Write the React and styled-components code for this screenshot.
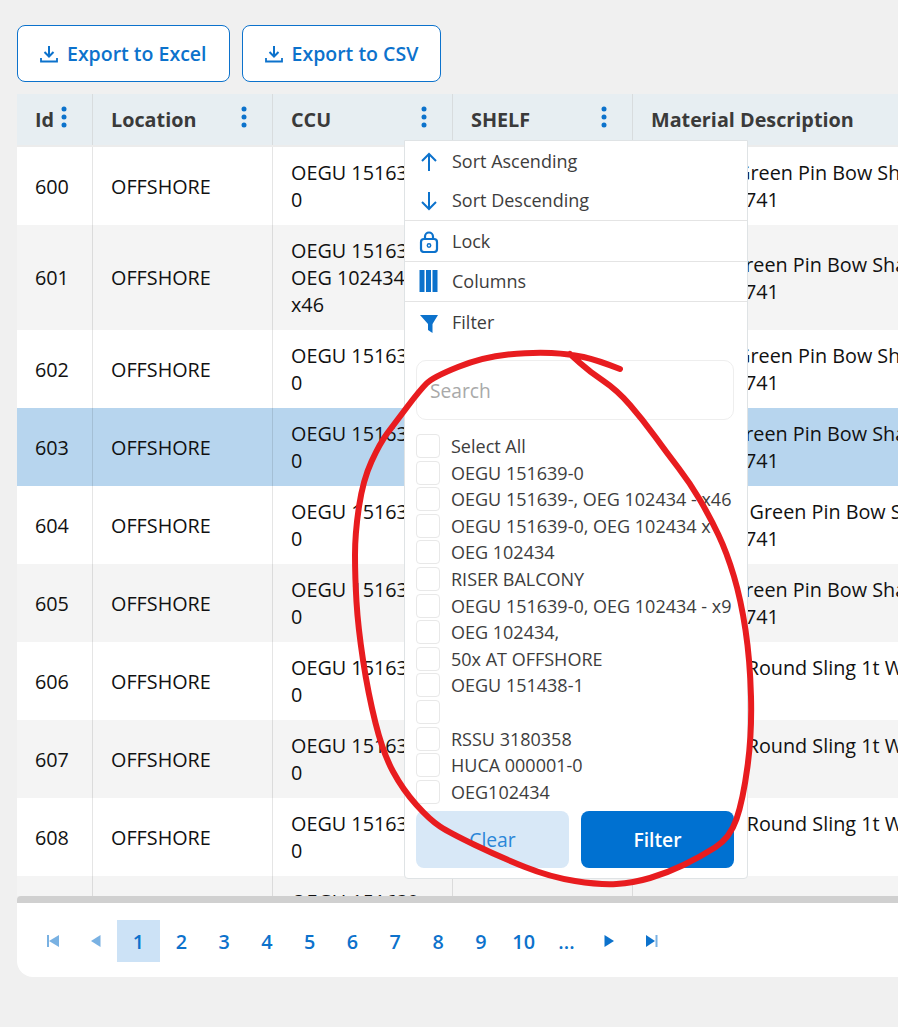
import React from "react";
import styled, { createGlobalStyle } from "styled-components";

const GlobalStyle = createGlobalStyle`
  html, body {
    margin: 0;
    padding: 0;
    background: #f0f0f0;
    overflow: hidden;
  }
  * {
    box-sizing: border-box;
  }
`;

const Page = styled.div`
  position: relative;
  width: 898px;
  height: 1027px;
  overflow: hidden;
  padding: 25px 0 0 17px;
  font-family: "Open Sans", "Liberation Sans", sans-serif;
  font-size: 19.8px;
  color: #111;
`;

const Toolbar = styled.div`
  display: flex;
  gap: 12px;
  margin-bottom: 12px;
`;

const ExportButton = styled.button`
  display: flex;
  align-items: center;
  gap: 9px;
  height: 57px;
  padding: 0 22px;
  background: #fff;
  border: 1px solid #0c72cc;
  border-radius: 8px;
  color: #0c72cc;
  font: 600 19.5px "Open Sans", sans-serif;
`;

const Card = styled.div`
  position: relative;
  width: 1300px;
`;

const HeaderRow = styled.div`
  display: flex;
  height: 51px;
  background: #e7eef2;
`;

const HeaderCell = styled.div`
  display: flex;
  align-items: center;
  justify-content: space-between;
  width: ${(p) => p.$width}px;
  padding: 0 25px 0 18px;
  border-right: 1px solid #d8dcde;
  font-weight: 700;
  color: #3a3a3a;
  white-space: nowrap;
`;

const Kebab = styled.svg`
  width: 6px;
  height: 22px;
  margin-top: -6px;
  fill: #0c72cc;
`;

const Rows = styled.div`
  height: 751px;
  overflow: hidden;
  border-top: 2px solid #ececec;
`;

const Row = styled.div`
  display: flex;
  background: ${(p) => (p.$selected ? "#b7d5ee" : p.$odd ? "#f4f4f4" : "#fff")};
`;

const Cell = styled.div`
  width: ${(p) => p.$width}px;
  padding: 12px 18px;
  line-height: 27px;
  border-right: 1px solid rgba(0, 0, 0, 0.1);
  display: flex;
  align-items: center;
`;

const Scrollbar = styled.div`
  height: 7px;
  background: #d0d0d0;
  border-radius: 4px 0 0 0;
`;

const Pager = styled.div`
  display: flex;
  align-items: center;
  height: 74px;
  padding: 2px 0 0 14.5px;
  background: #fff;
  border-bottom-left-radius: 16px;
`;

const PageButton = styled.div`
  display: flex;
  align-items: center;
  justify-content: center;
  width: 42.8px;
  height: 42px;
  color: #0c72cc;
  font-weight: 600;
  background: ${(p) => (p.$active ? "#cce2f6" : "transparent")};
`;

const PagerIcon = styled.svg`
  width: 14px;
  height: 14px;
  fill: #0c72cc;
  opacity: ${(p) => (p.$dim ? 0.55 : 1)};
`;

const Menu = styled.div`
  position: absolute;
  top: 46px;
  left: 387px;
  width: 344px;
  height: 739px;
  padding: 0 13px 0 11px;
  background: #fff;
  border: 1px solid #dfe3e5;
  border-radius: 0 0 4px 4px;
  color: #3d3d3d;
  font-size: 18px;
`;

const MenuGroup = styled.div`
  margin: 0 -13px 0 -11px;
  border-bottom: ${(p) => (p.$plain ? "none" : "1px solid #e4e4e4")};
`;

const MenuItem = styled.div`
  display: flex;
  align-items: center;
  height: 39.5px;
  padding-left: 14px;
`;

const MenuIcon = styled.svg`
  flex: none;
  width: 20px;
  height: 24px;
  margin-right: 13px;
  color: #0c72cc;
`;

const SearchInput = styled.input`
  display: block;
  width: 318px;
  height: 60px;
  margin: 18.5px 0 14px;
  padding: 0 13px;
  border: 1px solid #eee;
  border-radius: 10px;
  font: 19.2px "Open Sans", sans-serif;
  outline: none;
  &::placeholder {
    color: #a9a9a9;
  }
`;

const OptionRow = styled.label`
  display: flex;
  align-items: flex-start;
  height: 26.6px;
  line-height: 24px;
  white-space: nowrap;
`;

const Checkbox = styled.input`
  appearance: none;
  flex: none;
  width: 24px;
  height: 24px;
  margin: 0 11px 0 0;
  background: #fff;
  border: 1px solid #e8e8e8;
  border-radius: 4px;
`;

const Actions = styled.div`
  display: grid;
  grid-template-columns: 153px 153px;
  gap: 12px;
  margin-top: 4.6px;
`;

const ActionButton = styled.button`
  height: 57px;
  border: none;
  border-radius: 8px;
  background: ${(p) => (p.$primary ? "#0071d1" : "#d8e8f7")};
  color: ${(p) => (p.$primary ? "#fff" : "#2a86d8")};
  font: ${(p) => (p.$primary ? 600 : 400)} 19.3px "Open Sans", sans-serif;
`;

const Annotation = styled.svg`
  position: absolute;
  top: 0;
  left: 0;
  pointer-events: none;
`;

const columns = [76, 180, 180, 180, 684];
const headers = ["Id", "Location", "CCU", "SHELF", "Material Description"];

const green = "Green Pin Bow Shackle 4.75t";
const sling = "Round Sling 1t WLL 2m";
const rows = [
  { id: 600, ccu: "OEGU 151639-0", mat: "Heavy 2t " + green, code: "Art. Nr. 00741" },
  { id: 601, ccu: "OEGU 151639-, OEG 102434 - x46", mat: "Large 2t " + green, code: "Art. Nr. 00741" },
  { id: 602, ccu: "OEGU 151639-0", mat: "Heavy 2t " + green, code: "Art. Nr. 00741" },
  { id: 603, ccu: "OEGU 151639-0", mat: "Large 2t " + green, code: "Art. Nr. 00741", selected: true },
  { id: 604, ccu: "OEGU 151639-0", mat: "Shackle 1t " + green, code: "Art. Nr. 00741" },
  { id: 605, ccu: "OEGU 151639-0", mat: "Large 2t " + green, code: "Art. Nr. 00741" },
  { id: 606, ccu: "OEGU 151639-0", mat: "Polyester, " + sling, code: "Art. 52" },
  { id: 607, ccu: "OEGU 151639-0", mat: "Polyester, " + sling, code: "Art. 52" },
  { id: 608, ccu: "OEGU 151639-0", mat: "Polyester, " + sling, code: "Art. 52" },
  { id: 609, ccu: "OEGU 151639-0" },
];

const options = [
  "Select All",
  "OEGU 151639-0",
  "OEGU 151639-, OEG 102434 - x46",
  "OEGU 151639-0, OEG 102434 x",
  "OEG 102434",
  "RISER BALCONY",
  "OEGU 151639-0, OEG 102434 - x9",
  "OEG 102434,",
  "50x AT OFFSHORE",
  "OEGU 151438-1",
  "",
  "RSSU 3180358",
  "HUCA 000001-0",
  "OEG102434",
];

const pages = ["1", "2", "3", "4", "5", "6", "7", "8", "9", "10", "..."];

// hand drawn circle, smoothed through the midpoints
const stroke = [
  [620, 369], [597, 360], [570, 354], [533, 352], [483, 357], [433, 377], [420, 390],
  [395, 423], [380, 443], [363, 480], [355, 533], [355, 577], [358, 627], [368, 693],
  [383, 753], [403, 790], [430, 820], [450, 833], [500, 857], [550, 877], [600, 885],
  [633, 883], [667, 873], [700, 857], [730, 838], [743, 800], [752, 733], [750, 660],
  [741, 600], [727, 553], [710, 517], [690, 483], [667, 453], [643, 420], [617, 390],
  [590, 372], [570, 354],
];
const strokePath = stroke.reduce((d, [x, y], i) => {
  if (i === 0) return `M${x} ${y}`;
  if (i === stroke.length - 1) return `${d} L${x} ${y}`;
  const [nx, ny] = stroke[i + 1];
  return `${d} Q${x} ${y} ${(x + nx) / 2} ${(y + ny) / 2}`;
}, "");

const DownloadIcon = () => (
  <svg width="18" height="18" viewBox="0 0 18 18" fill="none" stroke="currentColor" strokeWidth="2">
    <path d="M9 1v10M4.500 7 9 11.500 13.500 7" />
    <path d="M1 13v3.500h16V13" strokeWidth="1.800" />
  </svg>
);

const KebabDots = () => (
  <Kebab viewBox="0 0 6 22">
    <circle cx="3" cy="3" r="2.500" />
    <circle cx="3" cy="11" r="2.500" />
    <circle cx="3" cy="19" r="2.500" />
  </Kebab>
);

const App = () => {
  return (
    <Page>
      <GlobalStyle />
      <Toolbar>
        <ExportButton>
          <DownloadIcon />
          Export to Excel
        </ExportButton>
        <ExportButton>
          <DownloadIcon />
          Export to CSV
        </ExportButton>
      </Toolbar>

      <Card>
        <HeaderRow>
          {headers.map((h, i) => (
            <HeaderCell key={h} $width={columns[i]}>
              {h}
              {i < 4 && <KebabDots />}
            </HeaderCell>
          ))}
        </HeaderRow>

        <Rows>
          {rows.map((r, i) => (
            <Row key={r.id} $odd={i % 2 === 1} $selected={r.selected}>
              <Cell $width={columns[0]}>{r.id}</Cell>
              <Cell $width={columns[1]}>OFFSHORE</Cell>
              <Cell $width={columns[2]}>
                <div>{r.ccu}</div>
              </Cell>
              <Cell $width={columns[3]} />
              <Cell $width={columns[4]}>
                {r.mat && (
                  <div>
                    {r.mat}
                    <br />
                    {r.code}
                  </div>
                )}
              </Cell>
            </Row>
          ))}
        </Rows>

        <Scrollbar />

        <Pager>
          <PageButton>
            <PagerIcon $dim viewBox="0 0 14 14">
              <path d="M1 1h2v12H1zM13 1v12L3 7z" />
            </PagerIcon>
          </PageButton>
          <PageButton>
            <PagerIcon $dim viewBox="0 0 14 14">
              <path d="M11.500 1v12L2 7z" />
            </PagerIcon>
          </PageButton>
          {pages.map((p, i) => (
            <PageButton key={p} $active={i === 0}>
              {p}
            </PageButton>
          ))}
          <PageButton>
            <PagerIcon viewBox="0 0 14 14">
              <path d="M2.500 1v12L12 7z" />
            </PagerIcon>
          </PageButton>
          <PageButton>
            <PagerIcon viewBox="0 0 14 14">
              <path d="M1 1v12l9-6z" />
              <path d="M10.500 1h2v12h-2z" opacity="0.55" />
            </PagerIcon>
          </PageButton>
        </Pager>

        <Menu>
          <MenuGroup>
            <MenuItem>
              <MenuIcon viewBox="0 0 20 24" fill="none" stroke="currentColor" strokeWidth="2">
                <path d="M10 22V5M3 12l7-7 7 7" />
              </MenuIcon>
              Sort Ascending
            </MenuItem>
            <MenuItem>
              <MenuIcon viewBox="0 0 20 24" fill="none" stroke="currentColor" strokeWidth="2">
                <path d="M10 4v17M3 14l7 7 7-7" />
              </MenuIcon>
              Sort Descending
            </MenuItem>
          </MenuGroup>
          <MenuGroup>
            <MenuItem>
              <MenuIcon viewBox="0 0 20 24" fill="none" stroke="currentColor" strokeWidth="2.200">
                <rect x="2" y="10" width="16" height="13" rx="3" />
                <path d="M6 10V7.500a4 4 0 0 1 8 0V10" />
                <circle cx="10" cy="16.500" r="1.700" strokeWidth="1.500" />
              </MenuIcon>
              Lock
            </MenuItem>
          </MenuGroup>
          <MenuGroup>
            <MenuItem>
              <MenuIcon viewBox="0 0 20 24" fill="currentColor">
                <path d="M0.500 1H5.500v22H0.500zM7 1h5v22H7zM13.500 1h5v22h-5z" />
              </MenuIcon>
              Columns
            </MenuItem>
          </MenuGroup>
          <MenuGroup $plain>
            <MenuItem>
              <MenuIcon viewBox="0 0 20 24" fill="currentColor">
                <path d="M1 5h18l-5.500 9v9L9 20v-6z" />
              </MenuIcon>
              Filter
            </MenuItem>
          </MenuGroup>

          <SearchInput placeholder="Search" />

          {options.map((o, i) => (
            <OptionRow key={i}>
              <Checkbox type="checkbox" />
              {o}
            </OptionRow>
          ))}

          <Actions>
            <ActionButton>Clear</ActionButton>
            <ActionButton $primary>Filter</ActionButton>
          </Actions>
        </Menu>
      </Card>

      <Annotation width="898" height="1027" viewBox="0 0 898 1027">
        <path d={strokePath} fill="none" stroke="#e81c1f" strokeWidth="6" strokeLinecap="round" strokeLinejoin="round" />
      </Annotation>
    </Page>
  );
};

export default App;
